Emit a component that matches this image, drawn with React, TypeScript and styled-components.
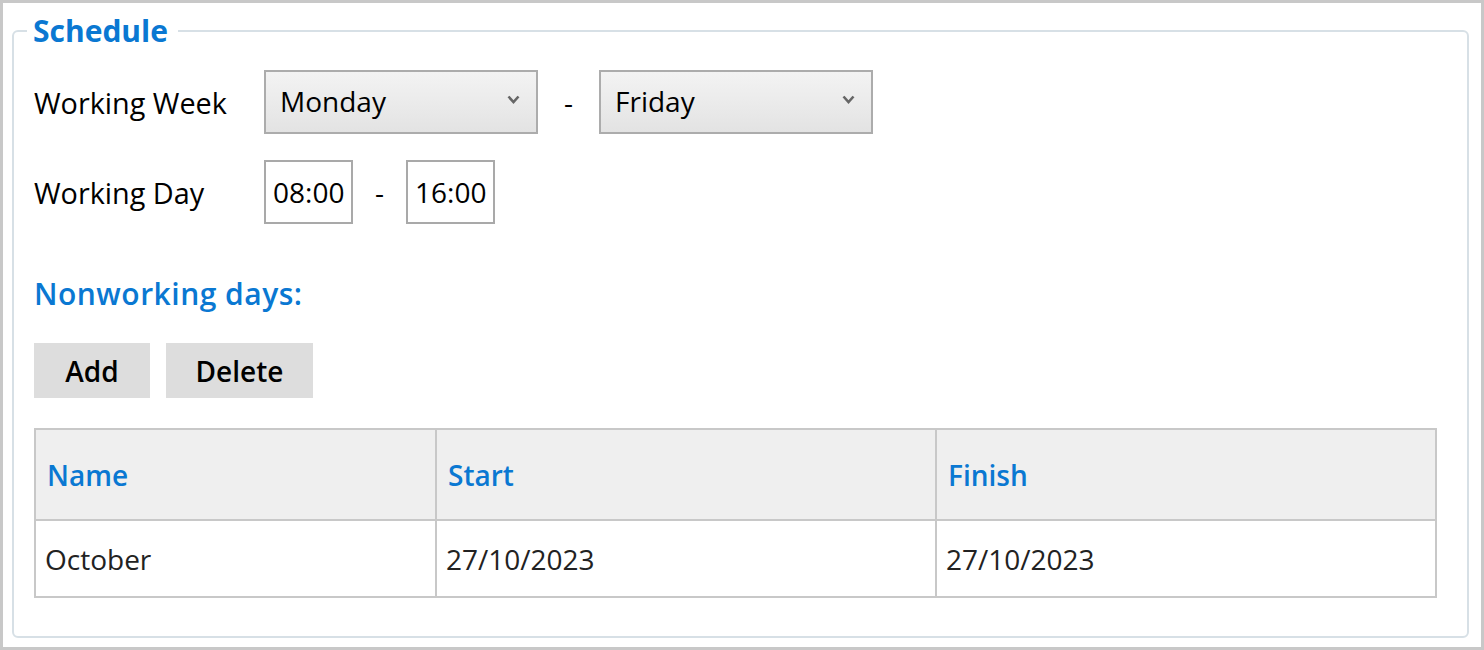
import React from "react";
import styled, { createGlobalStyle } from "styled-components";

const Global = createGlobalStyle`
  html, body { margin: 0; padding: 0; background: #fff; }
  body { font-family: "Open Sans", "Noto Sans", sans-serif; }
  * { box-sizing: border-box; }
`;

const BLUE = "#0a78d2";

const Frame = styled.div`
  width: 1484px;
  height: 650px;
  border: 3px solid #c8c8c8;
  padding: 10px 12px 9px 9px;
  display: flex;
  background: #fff;
`;

const Fieldset = styled.fieldset`
  flex: 1;
  margin: 0;
  min-width: 0;
  border: 2px solid #d7e0e6;
  border-radius: 6px;
  padding: 21px 29px 0 20px;
`;

const Legend = styled.legend`
  margin-left: -7px;
  padding: 0 10px 0 6px;
  font-size: 30px;
  line-height: 36px;
  font-weight: 700;
  color: ${BLUE};
`;

const Row = styled.div<{ $top?: number }>`
  display: flex;
  align-items: center;
  height: 64px;
  margin-top: ${(p) => p.$top ?? 0}px;
`;

const Label = styled.span`
  width: 230px;
  font-size: 28.8px;
  color: #000;
  flex: none;
`;

const Dash = styled.span<{ $w: number }>`
  width: ${(p) => p.$w}px;
  text-align: center;
  font-size: 28px;
  color: #000;
  flex: none;
`;

const Select = styled.div`
  width: 274px;
  height: 64px;
  flex: none;
  border: 2px solid #acacac;
  background: linear-gradient(#f3f3f3, #e3e3e3);
  display: flex;
  align-items: center;
  justify-content: space-between;
  padding: 0 16px 2px 14px;
  font-size: 28px;
  color: #000;
`;

const Chevron = styled.svg`
  width: 13px;
  height: 9px;
  margin-top: -3px;
`;

const TimeBox = styled.div`
  width: 89px;
  height: 64px;
  flex: none;
  border: 2px solid #a9a9a9;
  background: #fff;
  display: flex;
  align-items: center;
  padding-left: 7px;
  font-size: 28px;
  color: #000;
`;

const Heading = styled.h2`
  margin: 50px 0 0;
  font-size: 30px;
  letter-spacing: 0.5px;
  line-height: 40px;
  font-weight: 600;
  color: ${BLUE};
`;

const Buttons = styled.div`
  display: flex;
  gap: 16px;
  margin-top: 29px;
`;

const Button = styled.button<{ $w: number }>`
  width: ${(p) => p.$w}px;
  height: 55px;
  border: none;
  background: #dddddd;
  font-family: inherit;
  font-size: 28px;
  font-weight: 600;
  color: #000;
  padding: 0;
`;

const Table = styled.table`
  margin-top: 30px;
  border-collapse: collapse;
  table-layout: fixed;
  width: 1403px;
  border: 2px solid #c8c8c8;
`;

const Th = styled.th<{ $w: number }>`
  width: ${(p) => p.$w}px;
  height: 91px;
  background: #efefef;
  border: 2px solid #c8c8c8;
  text-align: left;
  padding: 0 10px 0 11px;
  font-size: 28px;
  font-weight: 600;
  color: ${BLUE};
`;

const Td = styled.td`
  height: 77px;
  border: 2px solid #c8c8c8;
  padding: 0 10px 0 9px;
  font-size: 28px;
  color: #222;
`;

const ChevronIcon = () => (
  <Chevron viewBox="0 0 13 9">
    <polyline points="1.5,1.5 6.5,7 11.5,1.5" fill="none" stroke="#666" strokeWidth="2.6" />
  </Chevron>
);

export default function App() {
  return (
    <>
      <Global />
      <Frame>
        <Fieldset>
          <Legend>Schedule</Legend>
          <Row>
            <Label>Working Week</Label>
            <Select>
              <span>Monday</span>
              <ChevronIcon />
            </Select>
            <Dash $w={61}>-</Dash>
            <Select>
              <span>Friday</span>
              <ChevronIcon />
            </Select>
          </Row>
          <Row $top={26}>
            <Label>Working Day</Label>
            <TimeBox>08:00</TimeBox>
            <Dash $w={53}>-</Dash>
            <TimeBox>16:00</TimeBox>
          </Row>
          <Heading>Nonworking days:</Heading>
          <Buttons>
            <Button $w={116}>Add</Button>
            <Button $w={147}>Delete</Button>
          </Buttons>
          <Table>
            <thead>
              <tr>
                <Th $w={401}>Name</Th>
                <Th $w={500}>Start</Th>
                <Th $w={500}>Finish</Th>
              </tr>
            </thead>
            <tbody>
              <tr>
                <Td>October</Td>
                <Td>27/10/2023</Td>
                <Td>27/10/2023</Td>
              </tr>
            </tbody>
          </Table>
        </Fieldset>
      </Frame>
    </>
  );
}
